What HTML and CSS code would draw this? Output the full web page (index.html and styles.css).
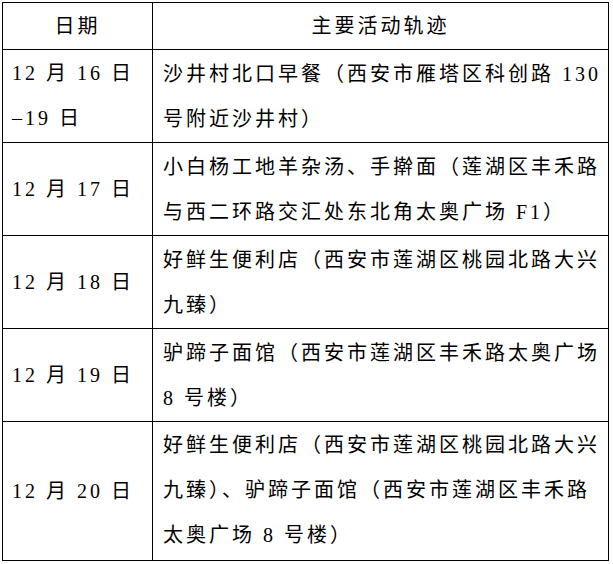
FILE: index.html
```html
<!DOCTYPE html>
<html lang="zh-CN">
<head>
<meta charset="utf-8">
<title>主要活动轨迹</title>
<link rel="stylesheet" href="styles.css">
</head>
<body>
<table class="trace">
  <thead>
    <tr>
      <th class="col-date">日期</th>
      <th class="col-place">主要活动轨迹</th>
    </tr>
  </thead>
  <tbody>
    <tr>
      <td class="date">12 月 16 日<br>–19 日</td>
      <td class="place">沙井村北口早餐（西安市雁塔区科创路 130<br>号附近沙井村）</td>
    </tr>
    <tr>
      <td class="date">12 月 17 日</td>
      <td class="place">小白杨工地羊杂汤、手擀面（莲湖区丰禾路<br>与西二环路交汇处东北角太奥广场 F1）</td>
    </tr>
    <tr>
      <td class="date">12 月 18 日</td>
      <td class="place">好鲜生便利店（西安市莲湖区桃园北路大兴<br>九臻）</td>
    </tr>
    <tr>
      <td class="date">12 月 19 日</td>
      <td class="place">驴蹄子面馆（西安市莲湖区丰禾路太奥广场<br>8 号楼）</td>
    </tr>
    <tr>
      <td class="date">12 月 20 日</td>
      <td class="place place-tall">好鲜生便利店（西安市莲湖区桃园北路大兴<br>九臻）、驴蹄子面馆（西安市莲湖区丰禾路<br>太奥广场 8 号楼）</td>
    </tr>
  </tbody>
</table>
</body>
</html>
```

FILE: styles.css
```css
html, body {
  margin: 0;
  padding: 0;
  background: #ffffff;
}

body {
  padding: 2px 0 0 2px;
  font-family: "Liberation Serif", "Noto Sans CJK SC", serif;
  font-size: 20px;
  color: #000000;
}

.trace {
  border-collapse: collapse;
  width: 607px;
  table-layout: fixed;
}

.trace th,
.trace td {
  border: 1px solid #000000;
  padding: 1px 0;
  line-height: 45px;
  letter-spacing: 3px;
  font-weight: normal;
  white-space: nowrap;
}

.trace .col-date {
  width: 149px;
  text-align: center;
}

.trace .col-place {
  text-align: center;
}

.trace th {
  padding: 0;
  line-height: 46px;
}

.trace .date {
  padding-left: 9px;
  vertical-align: middle;
  text-align: left;
}

.trace .place {
  padding: 2px 0 0 10px;
  text-align: left;
  vertical-align: middle;
}

.trace .place-tall {
  padding: 1px 0 2px 10px;
}
```
